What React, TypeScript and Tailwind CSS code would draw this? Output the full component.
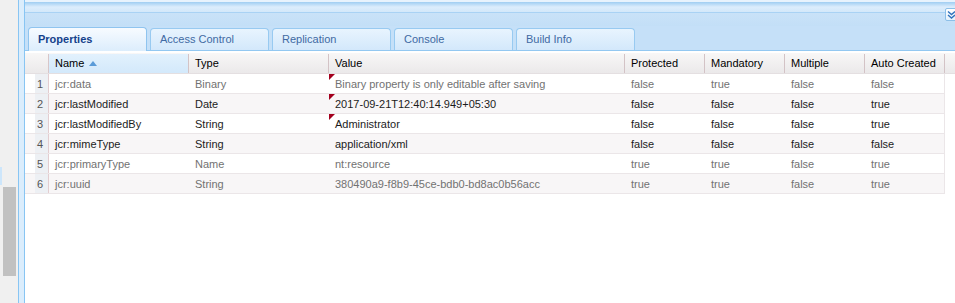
import { Fragment } from 'react'

type Row = {
  n: number
  name: string
  type: string
  value: string
  prot: string
  mand: string
  mult: string
  auto: string
  dim: boolean
  dirty: boolean
}

const rows: Row[] = [
  { n: 1, name: 'jcr:data', type: 'Binary', value: 'Binary property is only editable after saving', prot: 'false', mand: 'true', mult: 'false', auto: 'false', dim: true, dirty: true },
  { n: 2, name: 'jcr:lastModified', type: 'Date', value: '2017-09-21T12:40:14.949+05:30', prot: 'false', mand: 'false', mult: 'false', auto: 'true', dim: false, dirty: true },
  { n: 3, name: 'jcr:lastModifiedBy', type: 'String', value: 'Administrator', prot: 'false', mand: 'false', mult: 'false', auto: 'true', dim: false, dirty: true },
  { n: 4, name: 'jcr:mimeType', type: 'String', value: 'application/xml', prot: 'false', mand: 'false', mult: 'false', auto: 'false', dim: false, dirty: false },
  { n: 5, name: 'jcr:primaryType', type: 'Name', value: 'nt:resource', prot: 'true', mand: 'true', mult: 'false', auto: 'true', dim: true, dirty: false },
  { n: 6, name: 'jcr:uuid', type: 'String', value: '380490a9-f8b9-45ce-bdb0-bd8ac0b56acc', prot: 'true', mand: 'true', mult: 'false', auto: 'true', dim: true, dirty: false },
]

const tabs = ['Properties', 'Access Control', 'Replication', 'Console', 'Build Info']

const headers = [
  { label: 'Type', w: 'w-[140px]' },
  { label: 'Value', w: 'w-[296px]' },
  { label: 'Protected', w: 'w-[80px]' },
  { label: 'Mandatory', w: 'w-[80px]' },
  { label: 'Multiple', w: 'w-[80px]' },
  { label: 'Auto Created', w: 'w-[80px]' },
]

function DataRow({ row }: { row: Row }) {
  const tone = row.dim ? 'text-[#727272]' : 'text-[#1c1c1c]'
  const bg = row.n % 2 === 0 ? 'bg-[#f8f6f7]' : 'bg-white'
  return (
    <div className={`flex h-[20px] w-[920px] overflow-hidden border-b border-r border-[#ebe6e8] leading-[21px] ${bg} ${tone}`}>
      <div className="w-[24px] flex">
        <div className="ml-[10px] w-[14px] bg-[#edf0f4] border-r border-[#e3cdd0] text-right pr-[5px] text-[#555]">
          {row.n}
        </div>
      </div>
      <div className="w-[140px] px-[6px] truncate">{row.name}</div>
      <div className="w-[140px] px-[6px]">{row.type}</div>
      <div className="relative w-[296px] px-[6px] truncate">
        {row.dirty && (
          <span className="absolute left-0 top-0 w-0 h-0 border-t-[6px] border-r-[6px] border-t-[#a3001e] border-r-transparent" />
        )}
        {row.value}
      </div>
      <div className="w-[80px] px-[6px]">{row.prot}</div>
      <div className="w-[80px] px-[6px]">{row.mand}</div>
      <div className="w-[80px] px-[6px]">{row.mult}</div>
      <div className="w-[79px] px-[6px]">{row.auto}</div>
    </div>
  )
}

export default function App() {
  return (
    <div className="flex w-[955px] h-[303px] overflow-hidden bg-white text-[11px]" style={{ fontFamily: '"Liberation Sans", Arial, sans-serif' }}>
      {/* left scroll strip */}
      <div className="relative w-[18px] bg-[#f0f0f0]">
        <div className="absolute left-0 top-[167px] w-[2px] h-[18px] bg-[#cde6fb]" />
        <div className="absolute left-[3px] top-[187px] w-[13px] h-[89px] bg-[#c1c1c1]" />
      </div>
      <div className="w-[7px] border-x border-[#88c5f3] bg-[#dbedfc]" />

      {/* main panel */}
      <div className="flex flex-col flex-1 min-w-0">
        <div className="relative h-[26px]">
          <div className="h-[13px] border-t-2 border-t-[#e8f3fd] border-b border-b-[#a9d2f4] bg-gradient-to-b from-[#9fcdf2] via-[#dcedfc] to-[#d3e8fa]" />
          <div className="h-[13px] bg-gradient-to-b from-[#c9e2f8] to-[#c3dff7]" />
          <div className="absolute right-[-4px] top-[8px] w-[14px] h-[13px] rounded-[2px] border border-[#8cbfe8] bg-gradient-to-b from-white to-[#e4f1fc] flex items-center justify-start pl-[1px]">
            <svg width="9" height="9" viewBox="0 0 9 9" fill="none" stroke="#2f73bd" strokeWidth="1.4">
              <path d="M1 1.5 L4.5 4.5 L8 1.5" />
              <path d="M1 5 L4.5 8 L8 5" />
            </svg>
          </div>
        </div>

        {/* tab strip */}
        <div className="flex items-end gap-[3px] h-[25px] pl-[3px] bg-[#c5e0f8] border-b border-[#93c8f1]">
          {tabs.map((t, i) =>
            i === 0 ? (
              <div key={t} className="w-[119px] h-[24px] -mb-px rounded-t-[4px] border border-b-0 border-[#8fc4ef] bg-gradient-to-b from-[#f7fbff] to-[#dcedfc] pl-[9px] pt-[3px] font-bold text-[#15428b]">
                {t}
              </div>
            ) : (
              <div key={t} className="w-[119px] h-[22px] rounded-t-[4px] border border-b-0 border-[#98caf1] bg-gradient-to-b from-[#e8f4fe] to-[#d3e8fb] pl-[9px] pt-[2px] text-[#416aa3]">
                {t}
              </div>
            )
          )}
        </div>

        {/* grid */}
        <div className="flex flex-col pt-[2px]">
          <div className="flex h-[21px] pt-px bg-gradient-to-b from-[#f8f7f7] to-[#ebe9ea] border-b border-[#e4dfe1] text-black">
            <div className="w-[24px] flex">
              <div className="ml-[10px] w-[14px] border-r border-[#d8c6c8]" />
            </div>
            <div className="flex items-center gap-[5px] w-[140px] px-[6px] bg-gradient-to-b from-[#e2f1fd] to-[#d3e9fb] border-r border-[#d3c3c6]">
              Name
              <svg width="8" height="5" viewBox="0 0 8 5">
                <path d="M0 5 L4 0 L8 5 Z" fill="#5a9bd8" />
              </svg>
            </div>
            {headers.map((h) => (
              <Fragment key={h.label}>
                <div className={`flex items-center ${h.w} px-[6px] border-r border-[#d3c3c6]`}>{h.label}</div>
              </Fragment>
            ))}
          </div>
          {rows.map((r) => (
            <DataRow key={r.n} row={r} />
          ))}
        </div>
      </div>
    </div>
  )
}
